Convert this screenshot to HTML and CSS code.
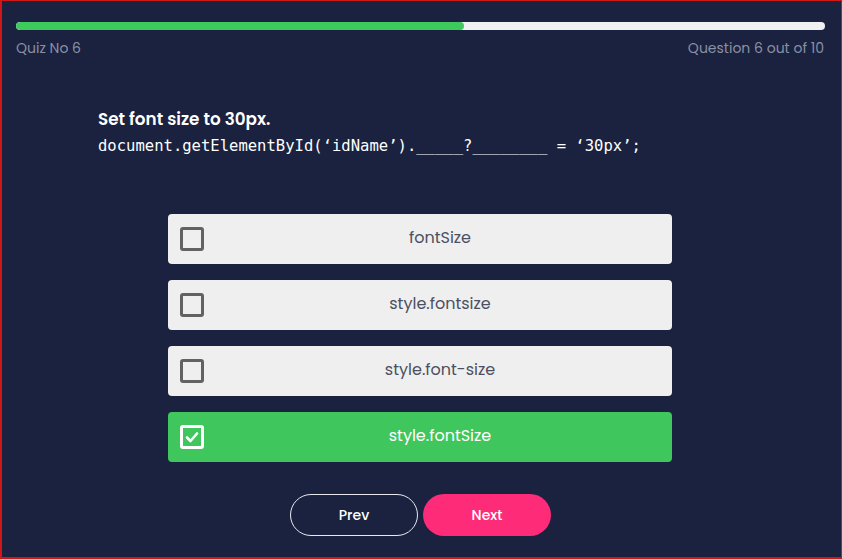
FILE: index.html
```html
<!DOCTYPE html>
<html>
<head>
<meta charset="utf-8">
<link rel="stylesheet" href="styles.css">
</head>
<body>
<div class="frame">
  <div class="progress"><div class="progress-fill" style="width:55.4%"></div></div>
  <div class="meta">
    <span>Quiz No 6</span>
    <span>Question 6 out of 10</span>
  </div>
  <div class="question">
    <div class="q-title">Set font size to 30px.</div>
    <div class="q-code">document.getElementById(‘idName’)._____?________ = ‘30px’;</div>
  </div>
  <div class="options">
    <div class="option"><span class="box"></span><span class="label">fontSize</span></div>
    <div class="option"><span class="box"></span><span class="label">style.fontsize</span></div>
    <div class="option"><span class="box"></span><span class="label">style.font-size</span></div>
    <div class="option selected"><span class="box"><svg width="16" height="16" viewBox="0 0 16 16"><polyline points="3,8.5 6.5,12 13,4.5" fill="none" stroke="#fff" stroke-width="2.6" stroke-linecap="round" stroke-linejoin="round"/></svg></span><span class="label">style.fontSize</span></div>
  </div>
  <div class="actions">
    <button class="btn btn-prev">Prev</button>
    <button class="btn btn-next">Next</button>
  </div>
</div>
</body>
</html>
```
FILE: styles.css
```css
html, body {
  margin: 0;
  padding: 0;
}
body {
  background: #cc1111;
  font-family: "Poppins", "Open Sans", "Noto Sans", sans-serif;
}
.frame {
  box-sizing: border-box;
  height: 559px;
  width: 842px;
  border: 1px solid #d01616;
  border-bottom-width: 2px;
  border-left-width: 2px;
  background: #1a2240;
  padding: 21px 17px 0 14px;
  display: flex;
  flex-direction: column;
}
.progress {
  height: 8px;
  margin-right: -1px;
  border-radius: 4px;
  background: #eef0f2;
  overflow: hidden;
}
.progress-fill {
  height: 100%;
  background: #3ec95c;
  border-radius: 4px;
}
.meta {
  margin-top: 8px;
  display: flex;
  justify-content: space-between;
  font-size: 14px;
  line-height: 20px;
  color: #8a90a4;
}
.question {
  margin-top: 49px;
  padding-left: 82px;
}
.q-title {
  color: #ffffff;
  font-weight: 600;
  font-size: 16.8px;
  line-height: 25px;
}
.q-code {
  margin-top: 3px;
  color: #ffffff;
  font-family: "DejaVu Sans Mono", "Liberation Mono", monospace;
  font-size: 15.55px;
  line-height: 22px;
  white-space: pre;
}
.options {
  margin: 57px auto 0;
  width: 504px;
  display: flex;
  flex-direction: column;
  gap: 16px;
}
.option {
  height: 50px;
  box-sizing: border-box;
  display: flex;
  align-items: center;
  padding: 0 0 0 12px;
  background: #efefef;
  border-radius: 4px;
  color: #4c5060;
  font-size: 16px;
}
.box {
  box-sizing: border-box;
  width: 24px;
  height: 24px;
  border: 3px solid #626262;
  border-radius: 3px;
  display: flex;
  align-items: center;
  justify-content: center;
  flex: none;
}
.label {
  flex: 1;
  margin-left: 4px;
  margin-top: -3px;
  text-align: center;
}
.option.selected {
  background: #3fc65c;
  color: #ffffff;
}
.option.selected .box {
  border-color: #ffffff;
}
.actions {
  margin-top: 32px;
  display: flex;
  justify-content: center;
  gap: 5px;
  padding-left: 1px;
}
.btn {
  width: 128px;
  height: 42px;
  border-radius: 21px;
  font-family: inherit;
  font-size: 14px;
  font-weight: 500;
  color: #ffffff;
  cursor: pointer;
}
.btn-prev {
  background: transparent;
  border: 1px solid #e8e8ee;
}
.btn-next {
  background: #fd2b78;
  border: none;
}
```
